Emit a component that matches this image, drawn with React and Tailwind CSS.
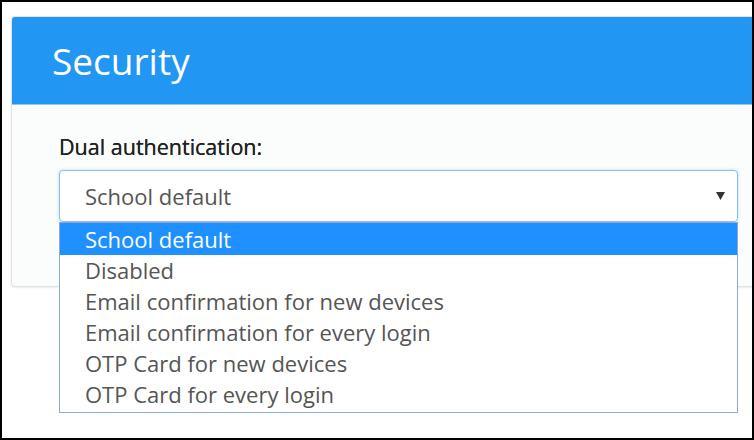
import React from 'react';

const options = [
  'School default',
  'Disabled',
  'Email confirmation for new devices',
  'Email confirmation for every login',
  'OTP Card for new devices',
  'OTP Card for every login',
];

const App = () => {
  return (
    <div
      className="w-[754px] h-[440px] bg-white border-2 border-black overflow-hidden pt-[14px] pl-[9px]"
      style={{ fontFamily: '"Open Sans", "Liberation Sans", sans-serif' }}
    >
      <div className="w-[760px] rounded-[4px] border border-[#dfe3e6] bg-[#fbfcfc] shadow-[0_1px_2px_rgba(0,0,0,0.08)]">
        <div className="h-[88px] bg-[#2196f3] rounded-t-[3px] border-b border-[#8ec5f3] flex items-center pl-[40px]">
          <h1 className="text-[37px] text-white leading-none">Security</h1>
        </div>
        <div className="pl-[47px] pt-[27px] h-[181px]">
          <label className="block text-[21.5px] text-[#222] leading-[29px] [text-shadow:0_0_0.4px_#222]">
            Dual authentication:
          </label>
          <div className="relative mt-[9px] w-[679px]">
            <div className="h-[52px] rounded-[4px] border border-[#8cbdec] bg-white flex items-center justify-between pl-[25px] pr-[12px] shadow-[0_0_3px_rgba(102,175,233,0.5)]">
              <span className="text-[22px] text-[#555]">School default</span>
              <svg width="9" height="8" viewBox="0 0 9 8">
                <polygon points="0,0 9,0 4.5,8" fill="#333" />
              </svg>
            </div>
            <ul className="absolute left-0 top-[52px] w-[679px] bg-white border border-[#8ea9df] pb-[2px]">
              {options.map((opt, i) => (
                <li
                  key={i}
                  className={`pl-[25px] text-[22px] flex items-center ${
                    i === 0 ? 'h-[32px] bg-[#1e90ff] text-white' : 'h-[31px] text-[#555]'
                  }`}
                >
                  {opt}
                </li>
              ))}
            </ul>
          </div>
        </div>
      </div>
    </div>
  );
};

export default App;
